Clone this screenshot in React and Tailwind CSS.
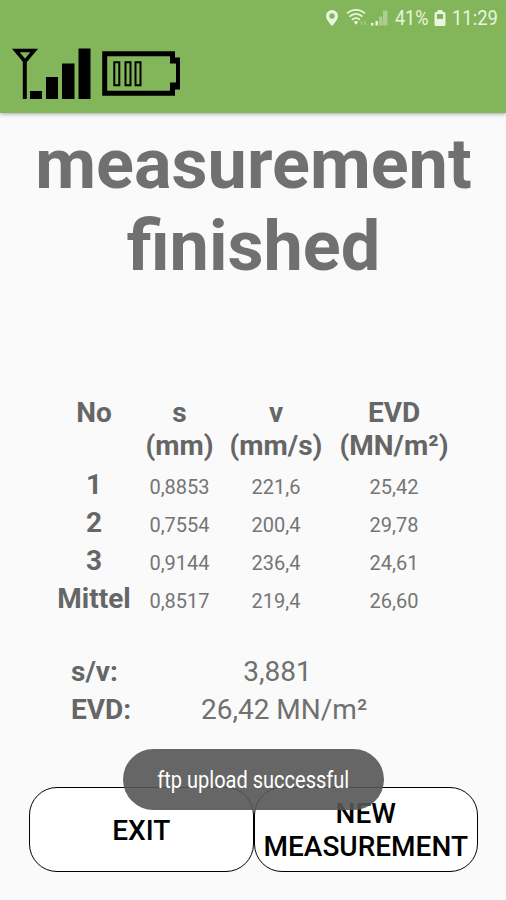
import React from 'react';

const rows = [
  { no: '1', s: '0,8853', v: '221,6', evd: '25,42' },
  { no: '2', s: '0,7554', v: '200,4', evd: '29,78' },
  { no: '3', s: '0,9144', v: '236,4', evd: '24,61' },
  { no: 'Mittel', s: '0,8517', v: '219,4', evd: '26,60' },
];

const StatusBar = () => (
  <div className="flex h-9 items-center justify-end pr-[9px] text-[#e9f5dc]">
    <svg className="mr-[7px]" width="14" height="18" viewBox="0 0 14 18" fill="currentColor">
      <path fillRule="evenodd" d="M7 1a6 6 0 0 0-6 6c0 4 6 10 6 10s6-6 6-10a6 6 0 0 0-6-6zm0 3.300a2.700 2.700 0 1 1 0 5.400 2.700 2.700 0 0 1 0-5.400z" />
    </svg>
    <svg className="mr-[2px]" width="23" height="18" viewBox="0 0 23 18" fill="none" stroke="currentColor" strokeWidth="1.700">
      <path d="M1 4.500a13 13 0 0 1 18 0M3.500 7.700a9 9 0 0 1 13 0M6 10.900a5.600 5.600 0 0 1 8 0" />
      <path d="M7.800 13L10 15.800l2.200-2.800a3.300 3.300 0 0 0-4.400 0z" fill="currentColor" stroke="none" />
      <path d="M15.500 16v-4M19 12v4" opacity=".3" />
    </svg>
    <svg className="mr-[7px]" width="17" height="18" viewBox="0 0 17 18" fill="currentColor">
      <path d="M0 14h2.500v2.500H0zM4.500 12h2.500v4.500H4.500z" />
      <path d="M8 7.500h3.500v9H8zM12 1.500h4.500v15H12z" opacity=".4" />
    </svg>
    <span className="w-[34px] whitespace-nowrap text-[20px] leading-6">
      <span className="inline-block origin-left scale-x-[0.9]">41%</span>
    </span>
    <svg className="mr-[6px] ml-[5px]" width="12" height="18" viewBox="0 0 12 18" fill="currentColor">
      <path fillRule="evenodd" d="M3.500 1h5v2H10a1.500 1.500 0 0 1 1.500 1.500v11A1.500 1.500 0 0 1 10 17H2A1.500 1.500 0 0 1 .5 15.500v-11A1.500 1.500 0 0 1 2 3h1.500zM3 5v5h6V5z" />
    </svg>
    <span className="w-[45px] whitespace-nowrap text-[20px] leading-6">
      <span className="inline-block origin-left scale-x-[0.92]">11:29</span>
    </span>
  </div>
);

const DeviceIcons = () => (
  <svg className="ml-3 mt-[11px]" width="170" height="54" viewBox="0 0 170 54">
    <path d="M3.800 3.500h18.400L13 14.500z" fill="none" stroke="#000" strokeWidth="3.600" />
    <path d="M10.800 13h4v39h-4zM18 44h12v8H18zM34 30h12v22H34zM50 16.500h12.500V52H50zM66.500 1.500H78.500V52h-12z" />
    <path d="M160.500 13.500V6.700H92.700v39.600h67.800v-6.800" fill="none" stroke="#000" strokeWidth="5" />
    <path d="M158 10.500h10v32h-10v-7h6V16.500h-6z" />
    <path d="M102.300 15.300h5v23h-5zM113.500 15.300h5v23h-5zM123.500 15.300h5v23h-5z" fill="none" stroke="#000" strokeWidth="2" />
  </svg>
);

const Row = ({ no, s, v, evd }) => (
  <div className="grid h-[38px] grid-cols-[88px_83px_110px_126px] items-baseline text-center text-[20px] leading-[38px] text-[#757575]">
    <span className="text-[28px] font-bold text-[#666]">{no}</span>
    <span>{s}</span>
    <span>{v}</span>
    <span>{evd}</span>
  </div>
);

const App = () => {
  return (
    <div className="flex h-[900px] w-[506px] flex-col overflow-hidden bg-[#fafafa] font-['Roboto',sans-serif] text-[#666]">
      <header className="h-[113px] shrink-0 bg-[#83b55a] shadow-[0_1px_4px_rgba(0,0,0,0.35)]">
        <StatusBar />
        <DeviceIcons />
      </header>

      <h1 className="mt-[10px] ml-[1px] text-center text-[70.2px] font-bold leading-[82px] text-[#707070]">
        measurement
        <br />
        finished
      </h1>

      <section className="mt-[109px] ml-[50px]">
        <div className="mb-[4px] grid grid-cols-[88px_83px_110px_126px] text-center text-[28px] font-bold leading-[33px]">
          <span>No</span>
          <span>s<br />(mm)</span>
          <span>v<br />(mm/s)</span>
          <span>EVD<br />(MN/m²)</span>
        </div>
        {rows.map((row) => (
          <Row key={row.no} {...row} />
        ))}
      </section>

      <section className="mt-[35px] ml-[71px] w-[366px] text-[28px] leading-[38px]">
        <div className="flex">
          <span className="font-bold">s/v:</span>
          <span className="flex-1 text-center text-[#707070]">3,881</span>
        </div>
        <div className="flex">
          <span className="font-bold">EVD:</span>
          <span className="flex-1 text-center text-[#707070]">26,42 MN/m²</span>
        </div>
      </section>

      <footer className="relative mt-auto mb-[28px] ml-[29px] flex h-[85px] w-[449px] text-[28px] font-medium leading-[33px] text-black">
        <button className="flex-1 rounded-[28px] border-[1.500px] border-black bg-white pt-[2px]">EXIT</button>
        <button className="flex-1 rounded-[28px] border-[1.500px] border-black bg-white pt-[1px]">
          NEW
          <br />
          MEASUREMENT
        </button>
        <div className="absolute -top-[38px] left-[94px] flex h-[61px] w-[261px] items-center justify-center rounded-full bg-[#555]/90 pt-[2px] text-[23px] font-normal whitespace-nowrap text-white">
          <span className="scale-x-[0.87]">ftp upload successful</span>
        </div>
      </footer>
    </div>
  );
};

export default App;
